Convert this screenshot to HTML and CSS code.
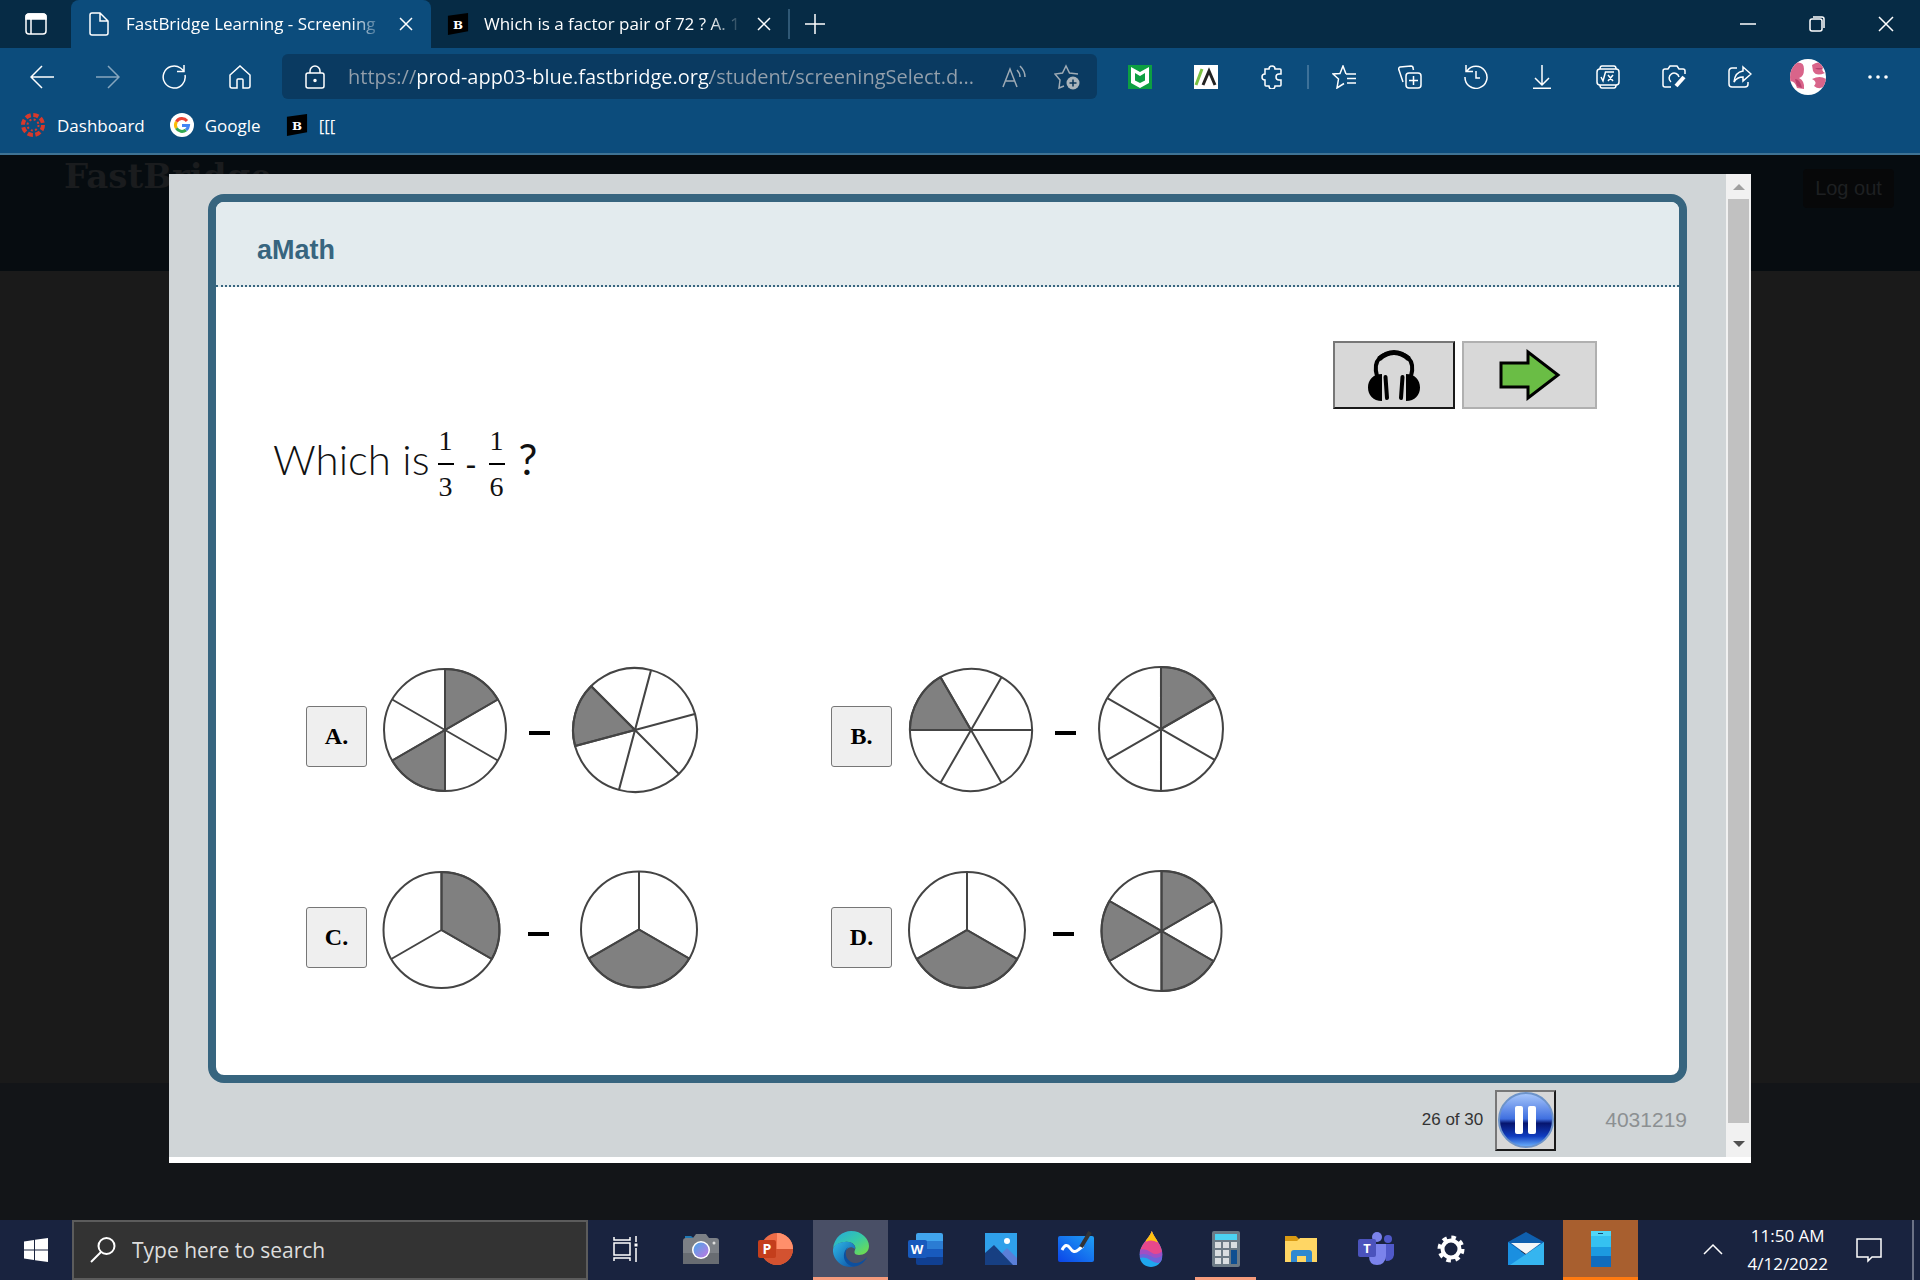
FILE: index.html
```html
<!DOCTYPE html>
<html lang="en">
<head>
<meta charset="utf-8">
<title>FastBridge Learning - Screening</title>
<link rel="stylesheet" href="styles.css">
</head>
<body>
<svg class="defs" aria-hidden="true">
  <defs>
    <g id="sixths"><circle r="61"/><path d="M0-61V61M-52.800-30.500L52.800 30.500M-52.800 30.500L52.800-30.500"/></g>
    <path id="sixth" class="shade" d="M0 0V-61A61 61 0 0 1 52.800-30.500Z"/>
    <g id="thirds"><circle r="58"/><path d="M0 0V-58M0 0L50.200 29M0 0L-50.200 29"/></g>
    <path id="third" class="shade" d="M0 0V-58A58 58 0 0 1 50.200 29Z"/>
    <symbol id="brainly" viewBox="0 0 24 24"><path d="M1 3L23 0V20L1 24Z" fill="#000"/><text x="12" y="17" text-anchor="middle" font-family="DejaVu Serif" font-weight="bold" font-size="13" fill="#fff">B</text></symbol>
    <linearGradient id="edgeBlue" x1="0" y1="0" x2="1" y2="1"><stop offset="0" stop-color="#2fb9e6"/><stop offset="1" stop-color="#0c4fa5"/></linearGradient>
    <linearGradient id="edgeGreen" x1="0" y1="0" x2="1" y2="1"><stop offset="0" stop-color="#25a8e0"/><stop offset=".5" stop-color="#36c9a8"/><stop offset="1" stop-color="#79e03f"/></linearGradient>
    <linearGradient id="lens" x1="0" y1="0" x2="1" y2="1"><stop offset="0" stop-color="#4aa5e8"/><stop offset="1" stop-color="#c077e0"/></linearGradient>
    <linearGradient id="board" x1="0" y1="1" x2="1" y2="0"><stop offset="0" stop-color="#0b44e8"/><stop offset="1" stop-color="#1fa0f5"/></linearGradient>
    <linearGradient id="ball" x1="0" y1="0" x2="0" y2="1"><stop offset="0" stop-color="#a9c8fb"/><stop offset=".48" stop-color="#3f6fe0"/><stop offset=".56" stop-color="#06156e"/><stop offset=".8" stop-color="#0f3cc0"/><stop offset="1" stop-color="#6fb6ff"/></linearGradient>
    <clipPath id="face"><circle cx="18" cy="18" r="18"/></clipPath>
    <clipPath id="dropclip"><path d="M17 0C20 9 30 17 30 29C30 40 22 44 16 44S2 40 2 29C2 17 14 9 17 0Z"/></clipPath>
  </defs>
</svg>

<div class="browser">
  <header class="chrome">
    <div class="tabs">
      <button class="tab-actions" aria-label="Tab actions"><svg class="i24" viewBox="0 0 24 24"><rect x="2" y="2" width="20" height="20" rx="3"/><path d="M2 7V5a3 3 0 0 1 3-3h14a3 3 0 0 1 3 3v2Z" fill="#fff"/><path d="M7 7v15"/></svg></button>
      <div class="tab active">
        <svg class="i24" viewBox="0 0 24 24"><path d="M13 1H5a2 2 0 0 0-2 2v18a2 2 0 0 0 2 2h14a2 2 0 0 0 2-2V9ZM13 1v8h8"/></svg>
        <span class="tab-title">FastBridge Learning - Screening</span>
        <button aria-label="Close tab"><svg class="i14" viewBox="0 0 14 14"><path d="M1 1L13 13M13 1L1 13"/></svg></button>
      </div>
      <div class="tab">
        <svg class="i22" viewBox="0 0 24 24"><use href="#brainly"/></svg>
        <span class="tab-title">Which is a factor pair of 72 ? A. 1</span>
        <button aria-label="Close tab"><svg class="i14" viewBox="0 0 14 14"><path d="M1 1L13 13M13 1L1 13"/></svg></button>
      </div>
      <span class="tab-rule"></span>
      <button class="new-tab" aria-label="New tab"><svg class="i20" viewBox="0 0 20 20"><path d="M10 0V20M0 10H20"/></svg></button>
      <div class="window-buttons">
        <button aria-label="Minimize"><svg class="i16" viewBox="0 0 16 16"><path d="M0 8H16"/></svg></button>
        <button aria-label="Restore"><svg class="i16" viewBox="0 0 16 16"><rect x="1" y="3" width="12" height="12" rx="2"/><path d="M4 1H13a2 2 0 0 1 2 2V12"/></svg></button>
        <button aria-label="Close"><svg class="i16" viewBox="0 0 16 16"><path d="M1 1L15 15M15 1L1 15"/></svg></button>
      </div>
    </div>

    <div class="toolbar">
      <div class="nav">
        <button aria-label="Back"><svg class="i24" viewBox="0 0 24 24"><path d="M24 12H1M12 1L1 12L12 23"/></svg></button>
        <button aria-label="Forward" class="dim"><svg class="i24" viewBox="0 0 24 24"><path d="M0 12H23M12 1L23 12L12 23"/></svg></button>
        <button aria-label="Refresh"><svg class="i24" viewBox="0 0 24 24"><path d="M23 10A11 11 0 1 1 18.500 3L22 6M22 0V6.500H15"/></svg></button>
        <button aria-label="Home"><svg class="i24" viewBox="0 0 24 24"><path d="M2 10L12 1L22 10V21a2 2 0 0 1-2 2H15V15a1 1 0 0 0-1-1H10a1 1 0 0 0-1 1V23H4a2 2 0 0 1-2-2Z"/></svg></button>
      </div>
      <div class="address">
        <svg class="i24" viewBox="0 0 24 24"><rect x="3" y="8" width="18" height="15" rx="2"/><path d="M7 8V6a5 5 0 0 1 10 0V8"/><circle cx="12" cy="15.500" r="1" fill="#fff"/></svg>
        <input class="url" type="text" aria-label="Address" value="https://prod-app03-blue.fastbridge.org/student/screeningSelect.d...">
        <button aria-label="Read aloud"><svg class="i24 grey" viewBox="0 0 24 24"><path d="M1 22L8 4L15 22M4 16H12.500M15 5Q18 8 18 12M18 1Q23 6 23 12"/></svg></button>
        <button aria-label="Add to favorites"><svg class="i26 grey" viewBox="0 0 26 26"><path d="M10 22L5 24L6 16L1 10L8.500 9L12 2L15.500 9L24 10"/><circle cx="19" cy="19" r="6.500" fill="#aab4bb" stroke="none"/><path d="M19 15.500V22.500M15.500 19H22.500" stroke="#0a3558"/></svg></button>
      </div>
      <div class="tools">
        <button aria-label="McAfee"><svg class="i24" viewBox="0 0 24 24"><path d="M0 0H24V24H0Z" fill="#0d9f42" stroke="none"/><path d="M3 2L12 7L21 2V18L12 23L3 18Z" fill="#fff" stroke="none"/><path d="M7 8L12 11L17 8V15.500L12 18L7 15.500Z" fill="#0d9f42" stroke="none"/></svg></button>
        <button aria-label="Extension"><svg class="i24" viewBox="0 0 24 24"><path d="M0 0H24V24H0Z" fill="#fff" stroke="none"/><path d="M2 20L8 4" stroke="#7ac142" stroke-width="3"/><path d="M9 20L15 6L21 20" stroke="#222" stroke-width="3"/></svg></button>
        <button aria-label="Extensions"><svg class="i24" viewBox="0 0 24 24"><path d="M5 4H9a3 3 0 0 1 6 0H20a1 1 0 0 1 1 1V9H19a3 3 0 0 0 0 6H21V20a1 1 0 0 1-1 1H15a3 3 0 0 1-6 0H6a1 1 0 0 1-1-1V15a3 3 0 0 1 0-6Z"/></svg></button>
        <span class="tool-rule"></span>
        <button aria-label="Favorites"><svg class="i24" viewBox="0 0 24 24"><path d="M14 9L11 1L8 8.500L1 9L6.500 14L5 23L12 18.500M14 9H24M15 13.500H24M15 18H24"/></svg></button>
        <button aria-label="Collections"><svg class="i24" viewBox="0 0 24 24"><rect x="8" y="8" width="15" height="15" rx="3"/><path d="M15.500 11V20M11 15.500H20M5 17L1 5a2 2 0 0 1 1-3L13 1a2 2 0 0 1 2 2L15.500 5"/></svg></button>
        <button aria-label="History"><svg class="i24" viewBox="0 0 24 24"><path d="M3 6A11 11 0 1 1 1 12M2 0V6.500H9M12 6V13H16"/></svg></button>
        <button aria-label="Downloads"><svg class="i24" viewBox="0 0 24 24"><path d="M12 0V20M5 13L12 20L19 13M3 23.200H21"/></svg></button>
        <button aria-label="Math solver"><svg class="i24" viewBox="0 0 24 24"><rect x="1" y="4" width="22" height="16" rx="3"/><path d="M4 4Q4 1 6 1H18Q20 1 20 4M4 20Q4 23 6 23H18Q20 23 20 20M5 12L7 16L9.500 7H18M12 10L17 16M17 10L12 16"/></svg></button>
        <button aria-label="Web capture"><svg class="i24" viewBox="0 0 24 24"><path d="M9 22H3a2 2 0 0 1-2-2V6a2 2 0 0 1 2-2H6L8 1H15L17 4H21a2 2 0 0 1 2 2V9M9 17A5 5 0 1 1 17 12"/><path d="M22 12L14 21" stroke-width="4"/></svg></button>
        <button aria-label="Share"><svg class="i24" viewBox="0 0 24 24"><path d="M9 3H4a3 3 0 0 0-3 3V19a3 3 0 0 0 3 3H17a3 3 0 0 0 3-3V17M15 2L23 9L15 16V12Q9 12 6 17Q7 7 15 6Z"/></svg></button>
        <button class="wide" aria-label="Profile"><svg class="i36" viewBox="0 0 36 36"><g clip-path="url(#face)" stroke="none"><path d="M0 0H36V36H0Z" fill="#fff"/><path d="M5 4Q14 2 14 10Q14 18 9 19Q15 22 14 30L7 29Q5 22 0 22V10ZM22 6Q30 0 33 8Q31 12 35 14Q26 18 23 12ZM22 20Q30 16 36 20V26Q30 32 24 27Q28 23 22 20Z" fill="#d9648a"/><path d="M5 20Q10 20 12 29L7 27ZM25 9Q29 12 33 9" fill="#b63f6c"/></g></svg></button>
        <button class="wide" aria-label="Settings and more"><svg class="i24" viewBox="0 0 24 24"><g fill="#fff" stroke="none"><circle cx="4" cy="12" r="1.800"/><circle cx="12" cy="12" r="1.800"/><circle cx="20" cy="12" r="1.800"/></g></svg></button>
      </div>
    </div>

    <nav class="bookmarks">
      <a href="#"><svg class="i26" viewBox="-13 -13 26 26"><circle r="10" stroke="#d8392b" stroke-width="4" stroke-dasharray="5.350 2.500"/><circle r="5.500" stroke="#d8392b" stroke-width="2" stroke-dasharray="2 2.320"/></svg>Dashboard</a>
      <a href="#"><svg class="i24" viewBox="0 0 24 24"><circle cx="12" cy="12" r="12" fill="#fff" stroke="none"/><g stroke-width="3"><path d="M17 8A6.500 6.500 0 0 0 6.400 8.700" stroke="#ea4335"/><path d="M6.400 8.700A6.500 6.500 0 0 0 6.400 15.300" stroke="#fbbc05"/><path d="M6.400 15.300A6.500 6.500 0 0 0 16 17" stroke="#34a853"/><path d="M16 17A6.500 6.500 0 0 0 18.500 12.500H12" stroke="#4285f4"/></g></svg>Google</a>
      <a href="#"><svg class="i22" viewBox="0 0 24 24"><use href="#brainly"/></svg>[[[</a>
    </nav>
  </header>

  <main class="page">
    <div class="backdrop">
      <div class="site-head"><span class="logo">FastBridge</span><button class="logout">Log out</button></div>
      <div class="site-body"></div>
      <div class="site-foot"></div>
    </div>

    <section class="dialog">
      <div class="content">
        <div class="panel">
          <h1 class="panel-title">aMath</h1>
          <div class="panel-body">
            <div class="actions">
              <button class="listen" aria-label="Listen"><svg class="headphones" viewBox="0 0 54 52"><path d="M10 27C5 10 16 4 27 4S49 10 44 27" fill="none" stroke="#000" stroke-width="4"/><path d="M12 10Q27-3 42 10" fill="none" stroke="#000" stroke-width="5"/><path d="M15 25V52C6 52 1 46 1 38.500S6 25 15 25ZM39 25V52C48 52 53 46 53 38.500S48 25 39 25Z"/><path d="M18.500 28L20 49M35.500 28L34 49" stroke="#000" stroke-width="4" stroke-linecap="round"/></svg></button>
              <button class="next" aria-label="Next"><svg class="arrow" viewBox="0 0 62 52"><path d="M2 14H29V3L59 26L29 49V38H2Z" fill="#6abd45" stroke="#000" stroke-width="3"/></svg></button>
            </div>
            <p class="question"><span class="words">Which is</span><span class="frac"><span>1</span><span>3</span></span><span class="minus">-</span><span class="frac"><span>1</span><span>6</span></span><span class="mark">?</span></p>
            <div class="options">
              <div class="option"><button>A.</button>
                <svg class="pies" viewBox="0 0 330 144"><g transform="translate(65 66)"><use href="#sixth"/><use href="#sixth" transform="rotate(180)"/><use href="#sixths"/></g><path class="dash" d="M149 69H170"/><g transform="translate(255 66) rotate(15) scale(1.016)"><use href="#sixth" transform="rotate(240)"/><use href="#sixths"/></g></svg></div>
              <div class="option"><button>B.</button>
                <svg class="pies" viewBox="0 0 330 144"><g transform="translate(66 66) rotate(30)"><use href="#sixth" transform="rotate(240)"/><use href="#sixths"/></g><path class="dash" d="M150 69H171"/><g transform="translate(256 65) scale(1.016)"><use href="#sixth"/><use href="#sixths"/></g></svg></div>
              <div class="option"><button>C.</button>
                <svg class="pies" viewBox="0 0 330 144"><g transform="translate(61.500 65)"><use href="#third"/><use href="#thirds"/></g><path class="dash" d="M148 69H169"/><g transform="translate(259 64.500)"><use href="#third" transform="rotate(120)"/><use href="#thirds"/></g></svg></div>
              <div class="option"><button>D.</button>
                <svg class="pies" viewBox="0 0 330 144"><g transform="translate(62 65)"><use href="#third" transform="rotate(120)"/><use href="#thirds"/></g><path class="dash" d="M148 69H169"/><g transform="translate(256.500 66) scale(.984)"><use href="#sixth"/><use href="#sixth" transform="rotate(120)"/><use href="#sixth" transform="rotate(240)"/><use href="#sixths"/></g></svg></div>
            </div>
          </div>
        </div>
        <div class="status">
          <span class="count">26 of 30</span>
          <button class="pause" aria-label="Pause"><svg viewBox="0 0 56 56"><circle cx="28" cy="28" r="27" fill="url(#ball)" stroke="#6d93c9" stroke-width="2"/><rect x="17" y="14" width="8" height="28" rx="2" fill="#fff"/><rect x="30" y="14" width="8" height="28" rx="2" fill="#fff"/></svg></button>
          <span class="ident">4031219</span>
        </div>
      </div>
      <div class="scroll"><span class="up"></span><span class="thumb"></span><span class="down"></span></div>
    </section>
  </main>

  <footer class="taskbar">
    <button class="start" aria-label="Start"><svg viewBox="0 0 24 24"><path d="M0 3.500L10 2V11.500H0ZM11 1.800L24 0V11.500H11ZM0 12.500H10V22L0 20.500ZM11 12.500H24V24L11 22.200Z" fill="#fff"/></svg></button>
    <label class="search"><svg viewBox="0 0 26 26"><circle cx="16.500" cy="9" r="8"/><path d="M11 15L1 25"/></svg><input type="search" placeholder="Type here to search" aria-label="Type here to search"></label>
    <div class="apps">
      <button aria-label="Task View"><svg class="small" viewBox="0 0 26 26"><path d="M1 7H17V19H1ZM1 1V4H17V1M1 25V22H17V25M23 0V6M23 12V26" fill="none" stroke="#fff" stroke-width="1.500"/><path d="M21.500 7.500H24.500V10.500H21.500Z" fill="#fff"/></svg></button>
      <button aria-label="Camera"><svg viewBox="0 0 36 36"><path d="M2 8V5H8L12 8Z" fill="#1f78b4"/><path d="M0 10Q0 7 3 7H10L13 3H23L26 7H33Q36 7 36 10V33H0Z" fill="#7c8086"/><path d="M0 22H36V33H0Z" fill="#686c72"/><circle cx="18" cy="19" r="9" fill="#fff"/><circle cx="18" cy="19" r="7.500" fill="url(#lens)"/><circle cx="31" cy="12" r="1.500" fill="#ddd"/></svg></button>
      <button aria-label="PowerPoint"><svg viewBox="0 0 36 36"><circle cx="19" cy="18" r="16" fill="#ed6c47"/><path d="M19 2A16 16 0 0 1 35 18H19Z" fill="#ff8f6b"/><path d="M3 18H35A16 16 0 0 1 3 18Z" fill="#d35230"/><rect y="9" width="18" height="18" rx="2" fill="#c43e1c"/><text x="9" y="23" text-anchor="middle" font-family="Open Sans" font-weight="bold" font-size="14" fill="#fff">P</text></svg></button>
      <button class="current" aria-label="Microsoft Edge"><svg viewBox="0 0 36 36"><path d="M0 18C1 6 10 0 18 0C29 0 36 8 36 15C36 21 31 24 26 24C21 24 21 21 22 19C24 15 19 10 12 11C6 11 1 15 0 18Z" fill="url(#edgeGreen)"/><path d="M0 18C2 13 7 11 12 11C19 10 23 15 22 18C16 13 10 20 13 27C15 32 20 35 22 35C10 39-1 29 0 18Z" fill="url(#edgeBlue)"/><path d="M15 16C9 24 16 33 24 32C29 31 32 28 34 26C32 31 27 35 21 35.500C10 34 8 22 15 16Z" fill="#0d4f9e"/></svg></button>
      <button aria-label="Word"><svg viewBox="0 0 36 36"><path d="M8 4Q8 2 10 2H33Q35 2 35 4V10H8Z" fill="#41a5ee"/><path d="M8 10H35V18H8Z" fill="#2b7cd3"/><path d="M8 18H35V26H8Z" fill="#185abd"/><path d="M8 26H35V32Q35 34 33 34H10Q8 34 8 32Z" fill="#103f91"/><rect y="9" width="19" height="18" rx="2" fill="#185abd"/><text x="9" y="23" text-anchor="middle" font-family="Open Sans" font-weight="bold" font-size="13" fill="#fff">W</text></svg></button>
      <button aria-label="Photos"><svg viewBox="0 0 36 36"><path d="M2 2H34V34H2Z" fill="#2fa0ea"/><path d="M17 24L24 17L34 27V34H17Z" fill="#5a7fd8"/><path d="M2 22L11 14L30 34H2Z" fill="#173f82"/><circle cx="24" cy="10" r="3" fill="#fff"/></svg></button>
      <button aria-label="Whiteboard"><svg viewBox="0 0 36 36"><rect y="5" width="36" height="26" rx="2" fill="url(#board)"/><path d="M4 19Q8 11 12 17T20 19L25 15" fill="none" stroke="#fff" stroke-width="3"/><path d="M23 16L32 1" stroke="#333" stroke-width="4"/></svg></button>
      <button aria-label="Paint 3D"><svg viewBox="-2 0 36 44"><g clip-path="url(#dropclip)"><path d="M0 0H32V44H0Z" fill="#1fa7ef"/><path d="M0 28Q8 24 16 29T32 22V36Q24 42 16 36T0 34Z" fill="#6f62d8"/><path d="M0 0H32V22Q26 34 16 29T0 28Z" fill="#e8488c"/><path d="M0 24Q8 20 16 26T32 22V28Q24 36 16 31T0 30Z" fill="#a04fc4"/><path d="M8 0H24V14Q17 10 10 13Z" fill="#ffc20e"/></g></svg></button>
      <button class="open" aria-label="Calculator"><svg viewBox="0 0 36 36"><rect x="4" width="28" height="36" rx="2" fill="#6c7a86"/><path d="M7 3H29V9H7Z" fill="#4cd2f2"/><path d="M7 11h6v6H7ZM15 11h6v6h-6ZM23 11h6v6h-6ZM7 19h6v6H7ZM15 19h6v6h-6ZM7 27h6v6H7ZM15 27h6v6h-6Z" fill="#d9dde1"/><path d="M23 19h6v14h-6Z" fill="#0f4f91"/></svg></button>
      <button aria-label="File Explorer"><svg viewBox="0 0 36 36"><path d="M2 5H13L16 8V12H2Z" fill="#d99a13"/><path d="M2 10H14L17 7H34V31H2Z" fill="#ffd664"/><path d="M8 31V22Q8 19 11 19H26Q29 19 29 22V31H23V25H14V31Z" fill="#2f88d0"/></svg></button>
      <button aria-label="Teams"><svg viewBox="0 0 36 36"><circle cx="19" cy="6" r="5" fill="#7b83eb"/><circle cx="30" cy="8" r="4" fill="#5059c9"/><path d="M22 13H36V24Q35 30 28 30Z" fill="#5059c9"/><path d="M11 13H28V25Q27 34 19 34T11 25Z" fill="#7b83eb"/><rect y="8" width="18" height="18" rx="2" fill="#4b53bc"/><text x="9" y="22" text-anchor="middle" font-family="Open Sans" font-weight="bold" font-size="13" fill="#fff">T</text></svg></button>
      <button aria-label="Settings"><svg viewBox="-18 -18 36 36"><circle r="8.500" fill="none" stroke="#fff" stroke-width="4"/><circle r="11.500" fill="none" stroke="#fff" stroke-width="4" stroke-dasharray="4.500 4.532"/></svg></button>
      <button aria-label="Mail"><svg viewBox="0 0 36 36"><path d="M0 11L18 1L36 11V20H0Z" fill="#0f5fae"/><path d="M0 11L18 24L36 34H0Z" fill="#1a8fe0"/><path d="M36 11V34H2Z" fill="#35b5f0"/><path d="M3 12H33L18 23Z" fill="#f4f6f8"/></svg></button>
      <button class="alert" aria-label="Your Phone"><svg viewBox="0 0 36 36"><rect x="8" width="20" height="36" rx="1" fill="#35c1f1"/><path d="M8 0H28V5H8Z" fill="#4fd6f8"/><path d="M8 16H28V25H8Z" fill="#1c9ae0"/><path d="M8 25H28V36H8Z" fill="#0f6cbd"/><path d="M15 2.500H20" stroke="#174a70"/></svg></button>
    </div>
    <div class="tray">
      <button aria-label="Show hidden icons"><svg class="i20" viewBox="0 0 20 20"><path d="M1 14L10 5L19 14"/></svg></button>
      <div class="clock"><span>11:50 AM</span><span>4/12/2022</span></div>
      <button aria-label="Notifications"><svg class="i26" viewBox="0 0 26 26"><path d="M1 2H25V20H16L12 24V20H1Z"/></svg></button>
    </div>
  </footer>
</div>
</body>
</html>
```
FILE: styles.css
```css
* { box-sizing: border-box; }
body { margin: 0; background: #131518; font-family: "Open Sans", "Noto Sans", sans-serif; }
button { padding: 0; border: 0; background: none; color: inherit; font: inherit; display: flex; align-items: center; justify-content: center; }
svg { display: block; flex: none; }
.defs { position: absolute; width: 0; height: 0; }
.browser { min-height: 100vh; display: flex; flex-direction: column; }

.i14 { width: 14px; height: 14px; }
.i16 { width: 16px; height: 16px; }
.i20 { width: 20px; height: 20px; }
.i22 { width: 22px; height: 22px; }
.i24 { width: 24px; height: 24px; }
.i26 { width: 26px; height: 26px; }
.i36 { width: 36px; height: 36px; }
.chrome svg, .tray svg { fill: none; stroke: #fff; stroke-width: 1.5; }
.chrome svg.grey { stroke: #9fabb5; }
.chrome use { stroke: none; }

/* Browser frame */
.chrome { background: #0c4c7c; color: #fff; border-bottom: 2px solid #3f7394; font-size: 17px; }
.tabs { display: flex; align-items: center; height: 48px; background: #062b45; }
.tab-actions { width: 71px; height: 48px; }
.tab { display: flex; align-items: center; gap: 15px; width: 357px; height: 48px; padding: 0 17px 0 16px; }
.tab.active { width: 360px; padding: 0 18px 0 16px; background: #0c4c7c; border-radius: 8px 8px 0 0; }
.tab-title { flex: 1; min-width: 0; padding-bottom: 2px; overflow: hidden; white-space: nowrap; -webkit-mask-image: linear-gradient(to left, transparent, #000 32px); mask-image: linear-gradient(to left, transparent, #000 32px); }
.tab-rule { width: 2px; height: 30px; background: #2f5875; }
.new-tab { width: 50px; height: 48px; }
.window-buttons { display: flex; margin-left: auto; }
.window-buttons button { width: 69px; height: 48px; }
.toolbar { display: flex; align-items: center; height: 57px; padding: 0 7px 0 9px; }
.nav, .tools { display: flex; align-items: center; }
.nav button, .tools button { width: 66px; height: 44px; }
.tools .wide { width: 70px; }
.nav .dim { opacity: .5; }
.address { flex: 1; max-width: 815px; display: flex; align-items: center; height: 45px; margin-left: 9px; padding: 0 14px 0 21px; background: #0a3a61; border-radius: 6px; gap: 21px; }
.address button { width: 32px; height: 32px; }
.url { flex: 1; min-width: 0; height: 40px; padding: 0; border: 0; outline: 0; font: 20px "Open Sans", sans-serif; color: #a3abb4; background: linear-gradient(90deg, #94a0ac 68px, #fff 68px, #fff 362px, #94a0ac 362px); -webkit-background-clip: text; background-clip: text; -webkit-text-fill-color: transparent; }
.tools { margin-left: auto; }
.tool-rule { width: 2px; height: 24px; margin: 0 2px; background: #3d7199; }
.bookmarks { display: flex; align-items: center; height: 48px; padding: 0 20px 8px; gap: 25px; }
.bookmarks a { display: flex; align-items: center; gap: 11px; color: #fff; text-decoration: none; }

/* Page behind the dialog */
.page { flex: 1; display: grid; }
.backdrop, .dialog { grid-area: 1 / 1; }
.backdrop { display: flex; flex-direction: column; background: #1a1a1a; }
.site-head { display: flex; justify-content: space-between; align-items: flex-start; height: 116px; padding: 0 26px 0 64px; background: #060c10; }
.logo { font: bold 34px/42px "DejaVu Serif", serif; color: #1a1c1e; }
.logout { width: 91px; height: 39px; margin-top: 14px; border-radius: 4px; background: #070809; color: #1e2022; font-family: "Liberation Sans", sans-serif; font-size: 20px; }
.site-body { flex: 1; }
.site-foot { height: 137px; background: #131518; }

/* Dialog */
.dialog { position: relative; display: flex; margin: 19px 169px 57px; background: #d0d5d7; border-bottom: 6px solid #fff; font-family: "Liberation Sans", Arial, sans-serif; }
.content { flex: 1; display: flex; flex-direction: column; padding: 20px 39px 0; }
.panel { flex: 1; border: 8px solid #37657f; border-radius: 16px; background: #fff; overflow: hidden; }
.panel-title { margin: 0; height: 85px; padding: 12px 41px 0; font-size: 27px; line-height: 72px; color: #37657f; background: #e3ebee; border-bottom: 2px dotted #37657f; }
.panel-body { padding: 54px 82px 66px 57px; }
.actions { display: flex; justify-content: flex-end; gap: 7px; }
.actions button { height: 68px; background: #d8d8d8; border: 2px solid #b0b0b0; }
.actions .listen { width: 122px; border-color: #777 #1a1a1a #1a1a1a #777; }
.actions .next { width: 135px; }
.headphones { width: 54px; height: 52px; }
.arrow { width: 62px; height: 52px; }
.question { display: flex; align-items: center; height: 74px; margin: 18px 0 163px; color: #111; }
.words, .mark { padding-bottom: 10px; font-family: Lato, "Open Sans", sans-serif; font-weight: 300; font-size: 42px; line-height: 64px; }
.mark { font-weight: 400; margin-left: 14px; }
.frac { width: 16px; display: flex; flex-direction: column; font: 28px/44px "Liberation Serif", serif; text-align: center; }
.words + .frac { margin-left: 8px; }
.frac span:first-child { border-bottom: 2px solid #000; }
.minus { width: 35px; text-align: center; font-family: Lato, sans-serif; font-size: 32px; }
.options { display: grid; grid-template-columns: repeat(2, 525px); gap: 57px 0; margin-left: 33px; }
.option { display: flex; align-items: center; gap: 13px; }
.option button { width: 61px; height: 61px; border: 1px solid #767676; border-radius: 3px; background: #efefef; color: #000; font: bold 24px "Liberation Serif", serif; }
.pies { width: 330px; height: 144px; fill: none; stroke: #444; stroke-width: 2; }
.shade { fill: #808080; }
.dash { stroke: #000; stroke-width: 4; }
.status { display: flex; align-items: center; justify-content: flex-end; height: 74px; }
.count { font-size: 17px; color: #333; }
.pause { width: 61px; height: 61px; margin: 0 49px 0 12px; background: #d8d8d8; border: 2px solid; border-color: #777 #1a1a1a #1a1a1a #777; }
.pause svg { width: 56px; height: 56px; }
.ident { font-size: 21px; color: #8c9092; }
.scroll { width: 25px; padding: 0 2px; display: flex; flex-direction: column; align-items: center; background: #f1f1f1; }
.up, .down { width: 12px; height: 25px; }
.down { height: 34px; }
.up::after, .down::after { content: ""; display: block; border: 6px solid transparent; }
.up::after { border-top: 0; border-bottom-color: #a0a0a0; margin-top: 10px; }
.down::after { border-bottom: 0; border-top-color: #505050; margin-top: 18px; }
.thumb { flex: 1; width: 21px; background: #c1c1c1; }

/* Taskbar */
.taskbar { display: flex; height: 60px; background: #19233f; color: #fff; }
.start { width: 72px; }
.start svg { width: 24px; height: 24px; }
.search { width: 516px; display: flex; align-items: center; gap: 16px; padding: 0 16px; background: #333; border: 2px solid #5c5c5c; }
.search svg { width: 26px; height: 26px; fill: none; stroke: #fff; stroke-width: 2; }
.search input { flex: 1; min-width: 0; padding: 0; border: 0; outline: 0; background: none; color: #ddd; font: 21px "Open Sans", sans-serif; }
.search input::placeholder { color: #ddd; opacity: 1; }
.apps { display: flex; }
.apps button { width: 75px; border-bottom: 3px solid transparent; }
.apps svg { width: 36px; height: 36px; }
.apps svg.small { width: 26px; height: 26px; }
.apps .current { background: #494f66; border-color: #f59b7c; }
.apps .open { border: 0; padding-bottom: 3px; background: linear-gradient(#f59b7c, #f59b7c) center bottom / 61px 3px no-repeat; }
.apps .alert { background: #a85f2f; border-color: #ff7a10; }
.tray { margin-left: auto; display: flex; align-items: center; padding-right: 30px; border-right: 2px solid #6b7286; margin-right: 6px; }
.clock { display: flex; flex-direction: column; align-items: center; margin: 0 28px 0 24px; font-size: 17px; line-height: 28px; }
```
